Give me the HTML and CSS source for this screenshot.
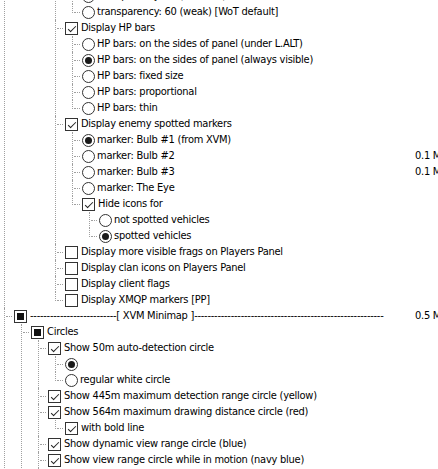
FILE: index.html
```html
<!DOCTYPE html>
<html lang="en">
<head>
    <meta charset="UTF-8">
    <title>XVM Settings</title>
    <link rel="stylesheet" href="styles.css">
</head>
<body>
    <div class="treeview">
        <ul class="tree">
            <li>
                <div class="node"><span class="box mixed"></span><span class="label">----------------------[ XVM Players Panel ]----------------------</span></div>
                <ul>
                    <li class="last">
                        <div class="node"><span class="box mixed"></span><span class="label">Players Panel</span></div>
                        <ul>
                            <li class="last">
                                <div class="node"><span class="box checked"></span><span class="label">Enable extended panel</span></div>
                                <ul>
                                    <li>
                                        <div class="node"><span class="box checked"></span><span class="label">Panel background</span></div>
                                        <ul>
                                            <li><div class="node"><span class="radio"></span><span class="label">transparency: 20 (strong)</span></div></li>
                                            <li><div class="node"><span class="radio"></span><span class="label">transparency: 40 (medium)</span></div></li>
                                            <li class="last"><div class="node"><span class="radio"></span><span class="label">transparency: 60 (weak) [WoT default]</span></div></li>
                                        </ul>
                                    </li>
                                    <li>
                                        <div class="node"><span class="box checked"></span><span class="label">Display HP bars</span></div>
                                        <ul>
                                            <li><div class="node"><span class="radio"></span><span class="label">HP bars: on the sides of panel (under L.ALT)</span></div></li>
                                            <li><div class="node"><span class="radio on"></span><span class="label">HP bars: on the sides of panel (always visible)</span></div></li>
                                            <li><div class="node"><span class="radio"></span><span class="label">HP bars: fixed size</span></div></li>
                                            <li><div class="node"><span class="radio"></span><span class="label">HP bars: proportional</span></div></li>
                                            <li class="last"><div class="node"><span class="radio"></span><span class="label">HP bars: thin</span></div></li>
                                        </ul>
                                    </li>
                                    <li>
                                        <div class="node"><span class="box checked"></span><span class="label">Display enemy spotted markers</span></div>
                                        <ul>
                                            <li><div class="node"><span class="radio on"></span><span class="label">marker: Bulb #1 (from XVM)</span></div></li>
                                            <li><div class="node"><span class="radio"></span><span class="label">marker: Bulb #2</span><span class="size">0.1 MB</span></div></li>
                                            <li><div class="node"><span class="radio"></span><span class="label">marker: Bulb #3</span><span class="size">0.1 MB</span></div></li>
                                            <li><div class="node"><span class="radio"></span><span class="label">marker: The Eye</span></div></li>
                                            <li class="last">
                                                <div class="node"><span class="box checked"></span><span class="label">Hide icons for</span></div>
                                                <ul>
                                                    <li><div class="node"><span class="radio"></span><span class="label">not spotted vehicles</span></div></li>
                                                    <li class="last"><div class="node"><span class="radio on"></span><span class="label">spotted vehicles</span></div></li>
                                                </ul>
                                            </li>
                                        </ul>
                                    </li>
                                    <li><div class="node"><span class="box"></span><span class="label">Display more visible frags on Players Panel</span></div></li>
                                    <li><div class="node"><span class="box"></span><span class="label">Display clan icons on Players Panel</span></div></li>
                                    <li><div class="node"><span class="box"></span><span class="label">Display client flags</span></div></li>
                                    <li class="last"><div class="node"><span class="box"></span><span class="label">Display XMQP markers [PP]</span></div></li>
                                </ul>
                            </li>
                        </ul>
                    </li>
                </ul>
            </li>
            <li>
                <div class="node"><span class="box mixed"></span><span class="label">--------------------------[ XVM Minimap ]---------------------------------------------------------</span><span class="size">0.5 MB</span></div>
                <ul>
                    <li>
                        <div class="node"><span class="box mixed"></span><span class="label">Circles</span></div>
                        <ul>
                            <li>
                                <div class="node"><span class="box checked"></span><span class="label">Show 50m auto-detection circle</span></div>
                                <ul>
                                    <li><div class="node"><span class="radio on"></span></div></li>
                                    <li class="last"><div class="node"><span class="radio"></span><span class="label">regular white circle</span></div></li>
                                </ul>
                            </li>
                            <li><div class="node"><span class="box checked"></span><span class="label">Show 445m maximum detection range circle (yellow)</span></div></li>
                            <li>
                                <div class="node"><span class="box checked"></span><span class="label">Show 564m maximum drawing distance circle (red)</span></div>
                                <ul>
                                    <li class="last"><div class="node"><span class="box checked"></span><span class="label">with bold line</span></div></li>
                                </ul>
                            </li>
                            <li><div class="node"><span class="box checked"></span><span class="label">Show dynamic view range circle (blue)</span></div></li>
                            <li><div class="node"><span class="box checked"></span><span class="label">Show view range circle while in motion (navy blue)</span></div></li>
                            <li><div class="node"><span class="box"></span><span class="label">Show artillery range circle</span></div></li>
                        </ul>
                    </li>
                </ul>
            </li>
        </ul>
    </div>
</body>
</html>
```

FILE: styles.css
```css
* {
    margin: 0;
    padding: 0;
    box-sizing: border-box;
}
body {
    background: #fff;
    color: #000;
    font-family: "DejaVu Sans Condensed", "DejaVu Sans", sans-serif;
    font-size: 11px;
    letter-spacing: -0.25px;
    line-height: 16px;
    overflow: hidden;
}
.treeview {
    width: 480px;
    height: 469px;
    overflow: hidden;
}
/* list is scrolled down a bit, the panel header sits above the view */
.tree {
    margin-top: -92px;
}
.tree,
.tree ul {
    list-style: none;
}
.tree ul {
    padding-left: 17px;
}
.tree li {
    position: relative;
}
/* dotted tree lines */
.tree li::before {
    content: "";
    position: absolute;
    left: 4px;
    top: 0;
    bottom: 0;
    border-left: 1px dotted #a0a0a0;
}
.tree li.last::before {
    bottom: auto;
    height: 9px;
}
.tree li::after {
    content: "";
    position: absolute;
    left: 6px;
    top: 8px;
    width: 6px;
    border-top: 1px dotted #a0a0a0;
}
.node {
    display: flex;
    align-items: center;
    height: 16px;
    padding-left: 14px;
    white-space: nowrap;
}
.label {
    flex: 1;
}
.size {
    width: 65px;
    flex: none;
}
.box,
.radio {
    position: relative;
    flex: none;
    width: 13px;
    height: 13px;
    border: 1px solid #333;
    background: #fff;
    margin-right: 3px;
}
.radio {
    border-radius: 50%;
    margin-right: 2px;
}
.radio.on::after {
    content: "";
    position: absolute;
    left: 2px;
    top: 2px;
    width: 7px;
    height: 7px;
    border-radius: 50%;
    background: #1a1a1a;
}
.box.checked::after {
    content: "";
    position: absolute;
    left: 4px;
    top: 1px;
    width: 3px;
    height: 7px;
    border: solid #222;
    border-width: 0 1px 1px 0;
    transform: rotate(45deg);
}
.box.mixed::after {
    content: "";
    position: absolute;
    left: 2px;
    top: 2px;
    width: 7px;
    height: 7px;
    background: #111;
}
```
